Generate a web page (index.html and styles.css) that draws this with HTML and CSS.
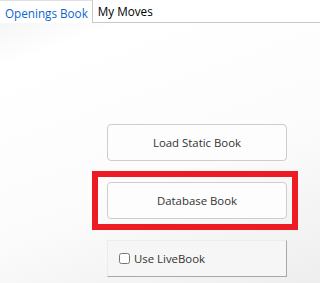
FILE: index.html
```html
<!DOCTYPE html>
<html lang="en">

<head>
    <meta charset="UTF-8">
    <title>Openings Book</title>
    <link rel="stylesheet" href="styles.css">
</head>

<body>
    <div class="tabs">
        <div class="tab active">Openings Book</div>
        <div class="tab">My Moves</div>
    </div>
    <div class="panel">
        <div class="actions">
            <button class="book-btn">Load Static Book</button>
            <div class="marked">
                <button class="book-btn">Database Book</button>
                <div class="highlight"></div>
            </div>
            <label class="live-box">
                <input type="checkbox">
                <span>Use LiveBook</span>
            </label>
        </div>
    </div>
</body>

</html>
```

FILE: styles.css
```css
html, body {
    margin: 0;
    padding: 0;
    width: 320px;
    height: 283px;
    overflow: hidden;
    font-family: "Open Sans", "Noto Sans", sans-serif;
    font-size: 11.5px;
    color: #000;
    background: #fff;
}

.tabs {
    display: flex;
    height: 22px;
    border-bottom: 1px solid #c9c9c9;
    background: #fff;
}

.tab {
    display: flex;
    align-items: center;
    padding: 0 5px;
    height: 22px;
    font-size: 11.7px;
}

.tab.active {
    color: #0a64d2;
    border-top: 1px solid #e0e0e0;
    border-right: 1px solid #c9c9c9;
    margin-bottom: -1px;
    background: #fff;
    box-sizing: border-box;
    padding: 1px 4px 0 5px;
    height: 23px;
}

.panel {
    height: 260px;
    background: linear-gradient(160deg, #f6f6f6 0%, #ffffff 12%, #fcfcfc 55%, #eeeeee 100%);
}

.actions {
    display: flex;
    flex-direction: column;
    gap: 21px;
    padding: 101px 0 0 107px;
    width: 180px;
}

.book-btn {
    display: block;
    width: 180px;
    height: 37px;
    padding: 0;
    border: 1px solid #cdcdcd;
    border-radius: 4px;
    background: #fdfdfd;
    font-family: inherit;
    font-size: 11.4px;
    color: #333;
}

.marked {
    position: relative;
}

.highlight {
    position: absolute;
    left: -15px;
    top: -11px;
    width: 206px;
    height: 59px;
    box-sizing: border-box;
    border: 6px solid #ed1c24;
}

.live-box {
    display: flex;
    align-items: center;
    gap: 4px;
    box-sizing: border-box;
    height: 37px;
    width: 180px;
    padding-left: 11px;
    border: 1px solid #ececec;
    border-right-color: #a8a8a8;
    border-bottom-color: #a8a8a8;
    background: #f6f6f6;
    color: #333;
    font-size: 11.4px;
}

.live-box input {
    margin: 0;
    width: 11px;
    height: 11px;
}
```
